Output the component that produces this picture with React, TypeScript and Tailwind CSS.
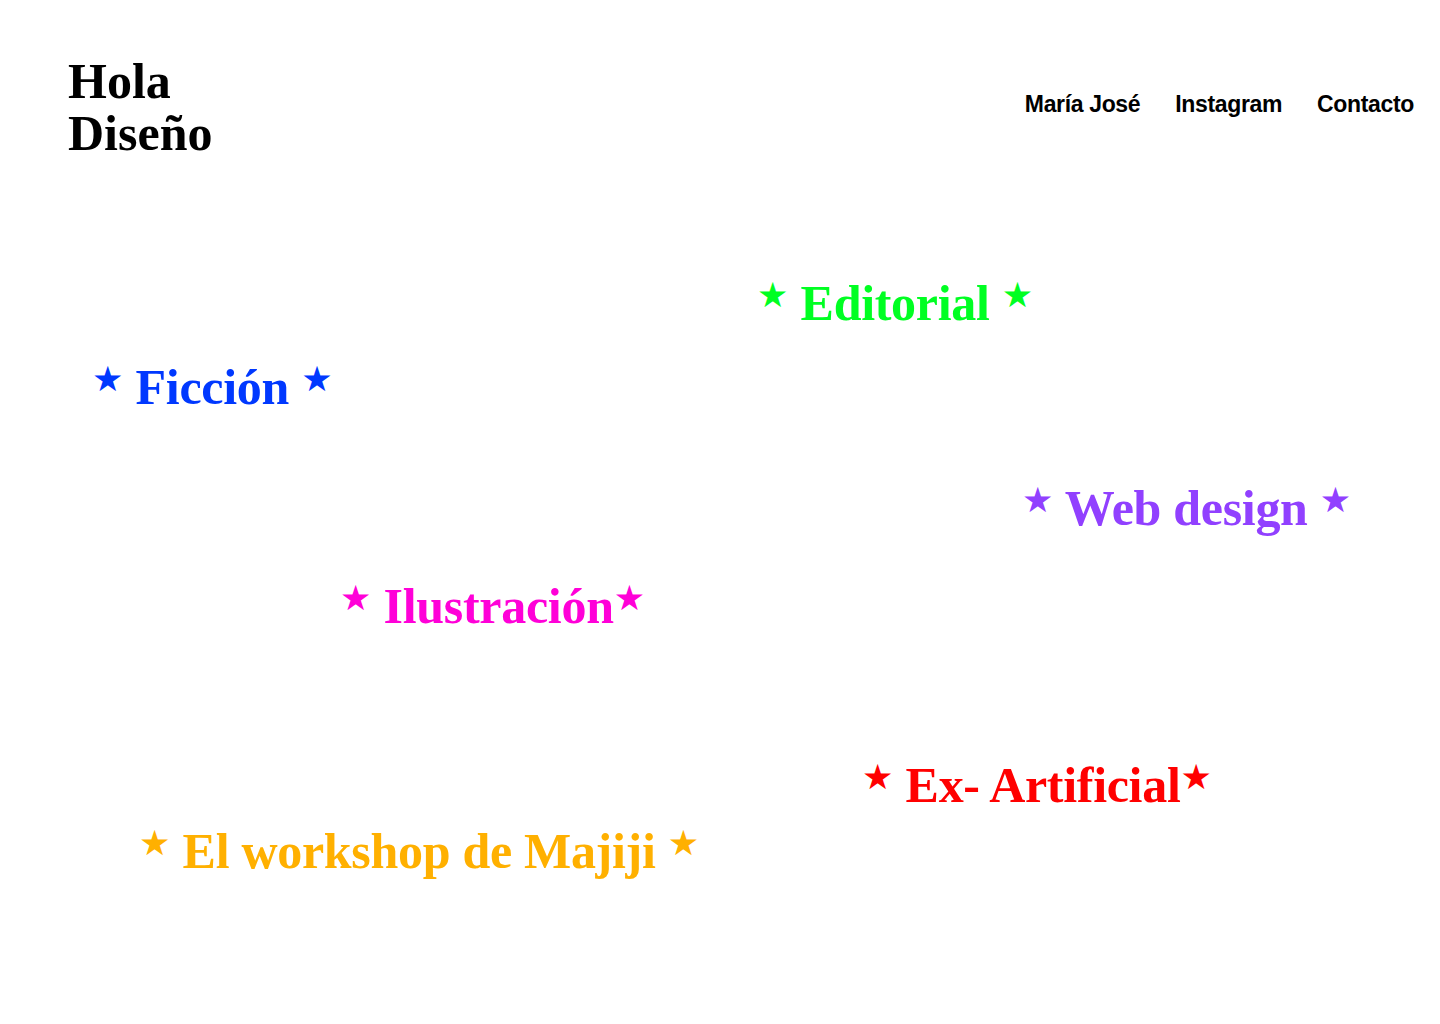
const nav = ["María José", "Instagram", "Contacto"];

const items = [
  { label: "Editorial", color: "text-[#00ff22]", space: true, cls: "ml-[757px] mt-[114px]" },
  { label: "Ficción", color: "text-[#0038ff]", space: true, cls: "ml-[92px] mt-[24px]" },
  { label: "Web design", color: "text-[#9140ff]", space: true, cls: "ml-[1022px] mt-[61px]" },
  { label: "Ilustración", color: "text-[#ff00d8]", space: false, cls: "ml-[340px] mt-[38px]" },
  { label: "Ex- Artificial", color: "text-[#ff0000]", space: false, cls: "ml-[862px] mt-[119px]" },
  { label: "El workshop de Majiji", color: "text-[#ffb000]", space: true, cls: "ml-[139px] mt-[6px]" },
];

function Star() {
  return (
    <span className="align-[13px] font-['DejaVu_Sans',sans-serif] text-[35px] leading-none tracking-normal">
      ★
    </span>
  );
}

export default function App() {
  return (
    <div className="min-h-[1024px] w-[1440px] bg-white text-black">
      <header className="flex items-start justify-between pl-[68px] pr-[26px] pt-[55px]">
        <h1 className="font-['Liberation_Serif','Times_New_Roman',serif] text-[50px] font-bold leading-[52px]">
          Hola
          <br />
          Diseño
        </h1>
        <nav className="mt-[35px] flex gap-[35px] font-['Liberation_Sans',Arial,sans-serif] text-[23px] font-bold leading-[28px] tracking-[-0.015em]">
          {nav.map((n) => (
            <a key={n} href="#">
              {n}
            </a>
          ))}
        </nav>
      </header>
      <main className="flex flex-col items-start pb-[100px] font-['Liberation_Serif','Times_New_Roman',serif]">
        {items.map((it) => (
          <div
            key={it.label}
            className={`${it.cls} ${it.color} whitespace-nowrap text-[50px] font-bold leading-[60px] tracking-[-0.006em]`}
          >
            <Star /> {it.label}
            {it.space ? " " : ""}
            <Star />
          </div>
        ))}
      </main>
    </div>
  );
}
